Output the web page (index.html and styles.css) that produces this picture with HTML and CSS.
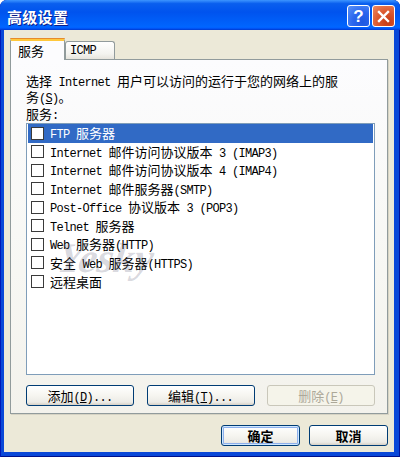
FILE: index.html
```html
<!DOCTYPE html>
<html lang="zh-CN">
<head>
<meta charset="utf-8">
<title>高级设置</title>
<link rel="stylesheet" href="styles.css">
</head>
<body>
<div class="window">
  <div class="titlebar">
    <span class="title">高级设置</span>
    <div class="controls">
      <button class="ctl help" aria-label="帮助"><span class="q">?</span></button>
      <button class="ctl close" aria-label="关闭">
        <svg width="13" height="13" viewBox="0 0 13 13"><path d="M2 2 L11 11 M11 2 L2 11" stroke="#fff" stroke-width="2.4" stroke-linecap="square"/></svg>
      </button>
    </div>
  </div>
  <div class="client">
    <div class="tabs">
      <div class="tab active">服务</div>
      <div class="tab"><span class="en">ICMP</span></div>
    </div>
    <div class="panel">
      <p class="desc">选择<span class="en"> Internet </span>用户可以访问的运行于您的网络上的服务<span class="en">(<u>S</u>)</span>。</p>
      <div class="label">服务<span class="en">:</span></div>
      <ul class="list">
        <li class="item selected"><span class="check"></span><span class="text"><span class="en">FTP </span>服务器</span></li>
        <li class="item"><span class="check"></span><span class="text"><span class="en">Internet </span>邮件访问协议版本<span class="en"> 3 (IMAP3)</span></span></li>
        <li class="item"><span class="check"></span><span class="text"><span class="en">Internet </span>邮件访问协议版本<span class="en"> 4 (IMAP4)</span></span></li>
        <li class="item"><span class="check"></span><span class="text"><span class="en">Internet </span>邮件服务器<span class="en">(SMTP)</span></span></li>
        <li class="item"><span class="check"></span><span class="text"><span class="en">Post-Office </span>协议版本<span class="en"> 3 (POP3)</span></span></li>
        <li class="item"><span class="check"></span><span class="text"><span class="en">Telnet </span>服务器</span></li>
        <li class="item"><span class="check"></span><span class="text"><span class="en">Web </span>服务器<span class="en">(HTTP)</span></span></li>
        <li class="item"><span class="check"></span><span class="text">安全<span class="en"> Web </span>服务器<span class="en">(HTTPS)</span></span></li>
        <li class="item"><span class="check"></span><span class="text">远程桌面</span></li>
      </ul>
      <div class="actions">
        <button class="btn"><span class="text">添加<span class="en">(<u>D</u>)...</span></span></button>
        <button class="btn"><span class="text">编辑<span class="en">(<u>T</u>)...</span></span></button>
        <button class="btn" disabled><span class="text">删除<span class="en">(<u>E</u>)</span></span></button>
      </div>
    </div>
    <div class="footer">
      <button class="btn main default">确定</button>
      <button class="btn main">取消</button>
    </div>
  </div>
  <div class="watermark">Yesky</div>
</div>
</body>
</html>
```
FILE: styles.css
```css
* { box-sizing: border-box; }
html, body { margin: 0; padding: 0; }
body {
  width: 400px;
  height: 457px;
  overflow: hidden;
  background: #ffffff;
  font-family: "Noto Sans CJK SC", sans-serif;
  font-size: 13px;
  color: #000;
}
.window {
  position: relative;
  width: 400px;
  height: 457px;
  display: flex;
  flex-direction: column;
  background: #0a48d8;
  border-radius: 7px 7px 0 0;
  box-shadow: inset 1px 0 #0019b8, inset -1px 0 #00139c, inset 0 -1px #00108a;
}
.titlebar {
  height: 30px;
  flex: none;
  display: flex;
  align-items: center;
  justify-content: space-between;
  padding: 0 5px 0 7px;
  border-radius: 7px 7px 0 0;
  background: linear-gradient(to bottom, #3d95ff 0%, #0a5fee 12%, #0053ee 40%, #0062fb 80%, #0066ff 90%, #005bff 94%, #0045dd 97%, #003dd7 100%);
}
.title {
  color: #fff;
  font-weight: 700;
  font-size: 15px;
  letter-spacing: 0.3px;
  text-shadow: 1px 1px #0a1c8a;
  margin-top: 2px;
}
.controls {
  display: flex;
  gap: 2px;
  margin-top: 2px;
}
.ctl {
  width: 23px;
  height: 22px;
  padding: 0;
  border: 1px solid #fff;
  border-radius: 3px;
  display: flex;
  align-items: center;
  justify-content: center;
}
.help {
  background: radial-gradient(circle at 70% 80%, #1d57e0 0%, #2a66ee 45%, #5a93f8 100%);
}
.help .q {
  color: #fff;
  font-family: "Liberation Sans", sans-serif;
  font-weight: 700;
  font-size: 17px;
  line-height: 1;
}
.close {
  background: radial-gradient(circle at 70% 80%, #c43a14 0%, #dc5a30 50%, #ee8a62 100%);
}
.client {
  flex: 1;
  margin: 0 6px 5px 4px;
  background: #ece9d8;
  display: flex;
  flex-direction: column;
}
.en {
  font-family: "Liberation Mono", monospace;
  font-size: 12px;
  letter-spacing: -0.7px;
  line-height: 1;
}
.tabs {
  display: flex;
  align-items: flex-end;
  height: 21px;
  margin: 8px 6px 0;
  position: relative;
  z-index: 1;
}
.tab {
  height: 18px;
  width: 50px;
  padding: 1px 0 0 4px;
  border: 1px solid #919b9c;
  border-bottom: none;
  border-radius: 3px 3px 0 0;
  background: linear-gradient(#ffffff, #f3f3ef 70%, #e6e4dc);
  display: flex;
  align-items: center;
}
.tab.active {
  width: 55px;
  height: 22px;
  margin-bottom: -1px;
  padding: 0 0 0 7px;
  border-top: 3px solid #ffc83c;
  background: #fcfcfe;
  position: relative;
}
.tab.active::before {
  content: "";
  position: absolute;
  left: -1px;
  right: -1px;
  top: -3px;
  height: 1px;
  background: #e68b2c;
  border-radius: 3px 3px 0 0;
}
.panel {
  margin: 0 6px;
  border: 1px solid #919b9c;
  background: linear-gradient(#fcfcfe, #f7f7f3 60%, #f3f2ec);
  padding: 13px 12px 7px 15px;
  box-shadow: 1px 1px 0 #d6d3c4;
}
.desc {
  margin: 0;
  width: 322px;
  line-height: 15px;
  height: 30px;
}
.label {
  margin-top: 3px;
  line-height: 15px;
  height: 15px;
}
.list {
  list-style: none;
  margin: 2px 0 0;
  padding: 0 1px;
  height: 252px;
  border: 1px solid #7f9db9;
  background: #fff;
}
.item {
  height: 18.5px;
  display: flex;
  align-items: center;
  padding-left: 3px;
  white-space: nowrap;
}
.item .text {
  line-height: 15px;
}
.item.selected {
  background: #316ac5;
  color: #fff;
}
.check {
  width: 13px;
  height: 13px;
  border: 1px solid #3a3a3a;
  background: #fff;
  margin-right: 6px;
  flex: none;
}
.actions {
  margin-top: 10px;
  display: flex;
  justify-content: space-between;
}
.btn {
  height: 21px;
  width: 108px;
  padding: 0;
  border: 1px solid #003c74;
  border-radius: 3px;
  background: linear-gradient(#ffffff, #f6f5f0 50%, #ecebe6 85%, #d6d0c5);
  font-family: "Noto Sans CJK SC", sans-serif;
  font-size: 13px;
  line-height: 15px;
  color: #000;
  display: flex;
  align-items: center;
  justify-content: center;
}
.btn:disabled {
  border-color: #c9c7ba;
  background: #f5f4ea;
  color: #aca899;
}
.footer {
  margin-top: 11px;
  padding-right: 6px;
  display: flex;
  justify-content: flex-end;
  gap: 9px;
}
.btn.main {
  width: 79px;
  font-weight: 700;
}
.btn.default {
  box-shadow: inset 0 0 0 1px #cee7ff, inset 0 0 0 2px #8eb0ec;
}
.watermark {
  position: absolute;
  left: 58px;
  top: 234px;
  font-family: "Liberation Serif", serif;
  font-style: italic;
  font-weight: 700;
  font-size: 42px;
  color: rgba(90, 90, 115, 0.24);
  pointer-events: none;
  transform: skewX(-8deg);
}
```
